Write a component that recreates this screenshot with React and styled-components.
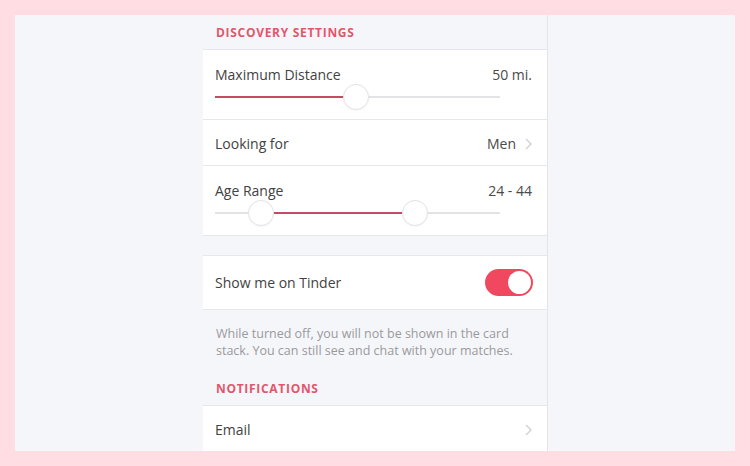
import React from "react";
import styled, { createGlobalStyle } from "styled-components";

const GlobalStyle = createGlobalStyle`
  html, body {
    margin: 0;
    padding: 0;
    background: #ffdde3;
  }
  body {
    font-family: "Open Sans", "Liberation Sans", sans-serif;
    color: #424242;
  }
`;

const Frame = styled.div`
  margin: 15px;
  height: 436px;
  background: #f5f6fa;
  overflow: hidden;
`;

const Panel = styled.div`
  width: 344px;
  height: 100%;
  margin-left: 188px;
  border-right: 1px solid #e4e5ea;
  display: flex;
  flex-direction: column;
`;

const SectionTitle = styled.div`
  height: 35px;
  box-sizing: border-box;
  padding: 0 12px 8px 13px;
  display: flex;
  align-items: flex-end;
  font-size: 12px;
  font-weight: 700;
  letter-spacing: 0.7px;
  color: #e2566c;
  text-transform: uppercase;
  border-bottom: 1px solid #e6e7eb;
  flex-shrink: 0;
`;

const Group = styled.div`
  background: #fff;
  border-top: ${(p) => (p.$top ? "1px solid #e6e7eb" : "none")};
  border-bottom: 1px solid #e6e7eb;
  flex-shrink: 0;
`;

const Spacer = styled.div`
  height: ${(p) => p.$h}px;
  flex-shrink: 0;
`;

const Row = styled.div`
  height: ${(p) => p.$h}px;
  box-sizing: border-box;
  padding: ${(p) => p.$pt || 0}px 15px 0 12px;
  border-top: ${(p) => (p.$first ? "none" : "1px solid #e6e7eb")};
  display: ${(p) => (p.$center ? "flex" : "block")};
  align-items: center;
`;

const Line = styled.div`
  flex: 1;
  display: flex;
  align-items: center;
  justify-content: space-between;
  font-size: 14px;
  line-height: 20px;
`;

const Value = styled.span`
  display: flex;
  align-items: center;
  gap: 9px;
  color: #4a4a4a;
`;

const Track = styled.div`
  position: relative;
  width: 285px;
  height: 2px;
  margin-top: ${(p) => p.$mt}px;
  background: #e3e3e6;
`;

const Fill = styled.div`
  position: absolute;
  top: 0;
  height: 2px;
  background: #c84a62;
`;

const Thumb = styled.div`
  position: absolute;
  top: -12px;
  width: 26px;
  height: 26px;
  margin-left: -13px;
  box-sizing: border-box;
  border-radius: 50%;
  background: #fff;
  border: 1px solid #e3e3e6;
  box-shadow: 0 1px 2px rgba(0, 0, 0, 0.04);
`;

const Toggle = styled.div`
  width: 48px;
  height: 27px;
  margin-right: -1px;
  border-radius: 14px;
  background: #f0485f;
  position: relative;
  flex-shrink: 0;
`;

const Knob = styled.div`
  position: absolute;
  top: 2px;
  right: 2px;
  width: 23px;
  height: 23px;
  border-radius: 50%;
  background: #fff;
`;

const Help = styled.p`
  margin: 0;
  padding: 15px 15px 0 13px;
  height: 61px;
  box-sizing: border-box;
  font-size: 12.5px;
  line-height: 17px;
  color: #9a9a9c;
  flex-shrink: 0;
`;

const Chevron = () => (
  <svg width="7" height="12" viewBox="0 0 7 12">
    <path d="M1 1l5 5-5 5" fill="none" stroke="#cfcfd3" strokeWidth="1.3" />
  </svg>
);

function Slider({ min, max, values, mt }) {
  const w = 285;
  const pos = values.map((v) => ((v - min) / (max - min)) * w);
  const left = values.length > 1 ? pos[0] : 0;
  const right = pos[pos.length - 1];
  return (
    <Track $mt={mt}>
      <Fill style={{ left, width: right - left }} />
      {pos.map((x, i) => (
        <Thumb key={i} style={{ left: x }} />
      ))}
    </Track>
  );
}

export default function App() {
  return (
    <>
      <GlobalStyle />
      <Frame>
        <Panel>
          <SectionTitle>Discovery Settings</SectionTitle>
          <Group>
            <Row $h={69} $pt={15} $first>
              <Line>
                <span>Maximum Distance</span>
                <Value>50 mi.</Value>
              </Line>
              <Slider min={0} max={100} values={[49.5]} mt={11} />
            </Row>
            <Row $h={46} $pt={2} $center>
              <Line>
                <span>Looking for</span>
                <Value>
                  Men <Chevron />
                </Value>
              </Line>
            </Row>
            <Row $h={70} $pt={15}>
              <Line>
                <span>Age Range</span>
                <Value>24 - 44</Value>
              </Line>
              <Slider min={18} max={55} values={[24, 44]} mt={11} />
            </Row>
          </Group>
          <Spacer $h={19} />
          <Group $top>
            <Row $h={53} $first $center>
              <Line>
                <span>Show me on Tinder</span>
                <Toggle>
                  <Knob />
                </Toggle>
              </Line>
            </Row>
          </Group>
          <Help>
            While turned off, you will not be shown in the card stack. You can
            still see and chat with your matches.
          </Help>
          <SectionTitle>Notifications</SectionTitle>
          <Group>
            <Row $h={46} $pt={1} $center $first>
              <Line>
                <span>Email</span>
                <Value>
                  <Chevron />
                </Value>
              </Line>
            </Row>
          </Group>
        </Panel>
      </Frame>
    </>
  );
}
